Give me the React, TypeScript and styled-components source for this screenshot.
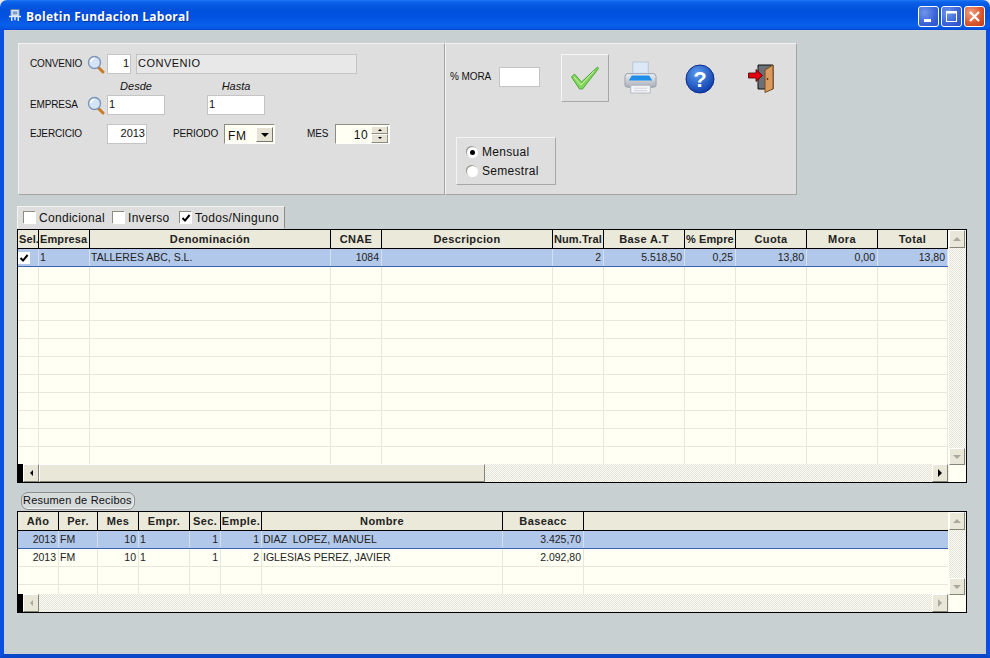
import React from 'react';
import styled, { createGlobalStyle } from 'styled-components';

const GlobalStyle = createGlobalStyle`
  html, body {
    margin: 0;
    padding: 0;
    background: #e8e8e8;
  }
  * {
    box-sizing: border-box;
  }
`;

const UI_FONT = `"Liberation Sans", Arial, sans-serif`;

const Window = styled.div`
  width: 990px;
  height: 658px;
  display: flex;
  flex-direction: column;
  border-radius: 7px 7px 0 0;
  overflow: hidden;
  font-family: ${UI_FONT};
  font-size: 11px;
  color: #111;
`;

const TitleBar = styled.div`
  height: 30px;
  flex: none;
  display: flex;
  align-items: center;
  padding: 0 5px 0 8px;
  background: linear-gradient(
    180deg,
    #2a7cf0 0,
    #0f6af0 1px,
    #0a5fe6 3px,
    #0050dc 10px,
    #0052e0 17px,
    #0860ea 25px,
    #0658e4 28px,
    #0048d4 30px
  );
`;

const TitleIcon = styled.svg`
  width: 14px;
  height: 14px;
  margin-right: 4px;
`;

const TitleText = styled.div`
  flex: 1;
  margin-top: 3px;
  color: #fff;
  font-family: "Open Sans", sans-serif;
  font-weight: 700;
  font-size: 12px;
  letter-spacing: 0.26px;
  text-shadow: 1px 1px 0 #0a2f9c;
`;

const CaptionButton = styled.div<{ $close?: boolean }>`
  width: 21px;
  height: 21px;
  margin-left: 2px;
  margin-top: 2px;
  border: 1px solid #fff;
  border-radius: 3px;
  display: flex;
  align-items: center;
  justify-content: center;
  background: ${(p) =>
    p.$close
      ? 'radial-gradient(circle at 30% 30%, #f0a080, #d8542c 60%, #c03c18)'
      : 'radial-gradient(circle at 30% 30%, #6f95ea, #3a62d8 60%, #2a4cc4)'};
  & > svg {
    width: 15px;
    height: 15px;
  }
`;

const Body = styled.div`
  flex: 1;
  display: flex;
  flex-direction: column;
  padding: 13px 19px 0 13px;
  background: #c9d0d2;
  border-left: 4px solid #0a50e0;
  border-right: 4px solid #0a50e0;
  border-bottom: 4px solid #0a47c8;
`;

const TopRow = styled.div`
  display: flex;
  height: 152px;
  margin-left: 1px;
`;

const Panel = styled.div<{ $w: number }>`
  width: ${(p) => p.$w}px;
  display: flex;
  flex-direction: column;
  background: #dedede;
  border: 1px solid;
  border-color: #f2f2f2 #a4a4a4 #a4a4a4 #f2f2f2;
`;

const FormArea = styled.div`
  padding: 10px 0 0 11px;
  display: flex;
  flex-direction: column;
`;

const FormRow = styled.div<{ $top?: number }>`
  display: flex;
  align-items: center;
  height: 20px;
  margin-top: ${(p) => p.$top ?? 0}px;
`;

const Label = styled.span<{ $w: number; $ml?: number }>`
  width: ${(p) => p.$w}px;
  margin-left: ${(p) => p.$ml ?? 0}px;
  padding-bottom: 2px;
  flex: none;
  font-size: 10px;
  letter-spacing: -0.15px;
  white-space: nowrap;
`;

const Caption = styled.span<{ $w: number; $ml?: number }>`
  width: ${(p) => p.$w}px;
  margin-left: ${(p) => p.$ml ?? 0}px;
  padding-top: 2px;
  text-align: center;
  font-style: italic;
  font-size: 11px;
`;

const Lens = styled.svg`
  width: 18px;
  height: 19px;
  flex: none;
  margin-right: 2px;
`;

const TextField = styled.div<{ $w: number; $align?: string; $ml?: number; $read?: boolean }>`
  width: ${(p) => p.$w}px;
  height: 20px;
  flex: none;
  margin-left: ${(p) => p.$ml ?? 0}px;
  padding: 0 1px;
  line-height: 16px;
  font-size: 11px;
  letter-spacing: ${(p) => (p.$read ? 0.5 : 0)}px;
  text-align: ${(p) => p.$align ?? 'left'};
  background: ${(p) => (p.$read ? '#e8e8e8' : '#fff')};
  border: 1px solid #c4c4c4;
  white-space: nowrap;
`;

const SelectBox = styled.div`
  width: 51px;
  height: 20px;
  flex: none;
  margin-right: 32px;
  display: flex;
  align-items: center;
  justify-content: space-between;
  padding: 1px 1px 0 3px;
  background: #fffff4;
  border: 1px solid #8d8d82;
  border-right-color: #fff;
  border-bottom-color: #fff;
  font-size: 12px;
`;

const SelectText = styled.span`
  padding-top: 2px;
  letter-spacing: 0.6px;
`;

const SelectButton = styled.div`
  width: 17px;
  height: 15px;
  display: flex;
  align-items: center;
  justify-content: center;
  background: #e6e3d4;
  border: 1px solid;
  border-color: #fff #77776c #77776c #fff;
`;

const Arrow = styled.i<{ $dir: 'up' | 'down' | 'left' | 'right'; $off?: boolean; $s?: number }>`
  display: block;
  width: 0;
  height: 0;
  ${(p) => {
    const s = p.$s ?? 4;
    const c = p.$off ? '#aaa99c' : '#000';
    const t = 'transparent';
    if (p.$dir === 'up') return `border-left: ${s}px solid ${t}; border-right: ${s}px solid ${t}; border-bottom: ${s}px solid ${c};`;
    if (p.$dir === 'down') return `border-left: ${s}px solid ${t}; border-right: ${s}px solid ${t}; border-top: ${s}px solid ${c};`;
    if (p.$dir === 'left') return `border-top: ${s}px solid ${t}; border-bottom: ${s}px solid ${t}; border-right: ${s}px solid ${c};`;
    return `border-top: ${s}px solid ${t}; border-bottom: ${s}px solid ${t}; border-left: ${s}px solid ${c};`;
  }}
`;

const SpinBox = styled.div`
  width: 55px;
  height: 20px;
  flex: none;
  display: flex;
  align-items: center;
  justify-content: flex-end;
  background: #fffff4;
  border: 1px solid #8d8d82;
  border-right-color: #fff;
  border-bottom-color: #fff;
  font-size: 12px;
`;

const SpinValue = styled.span`
  margin-right: 3px;
  letter-spacing: 0.4px;
  padding-top: 1px;
`;

const SpinButtons = styled.div`
  width: 17px;
  height: 17px;
  margin-right: 1px;
  display: flex;
  flex-direction: column;
`;

const SpinButton = styled.div`
  flex: 1;
  display: flex;
  align-items: center;
  justify-content: center;
  background: #e6e3d4;
  border: 1px solid;
  border-color: #fff #8d8d82 #8d8d82 #fff;
`;

const ActionRow = styled.div`
  display: flex;
  align-items: flex-start;
  height: 93px;
  padding: 10px 0 0 4px;
`;

const MoraBlock = styled.div`
  display: flex;
  align-items: center;
  width: 110px;
  margin-top: 13px;
`;

const MoraLabel = styled.span`
  width: 49px;
  font-size: 10px;
  letter-spacing: -0.1px;
  padding-bottom: 2px;
`;

const MoraInput = styled.div`
  width: 41px;
  height: 20px;
  background: #fff;
  border: 1px solid #c4c4c4;
`;

const OkButton = styled.div`
  width: 48px;
  height: 48px;
  margin-left: 1px;
  display: flex;
  align-items: center;
  justify-content: center;
  border: 1px solid;
  border-color: #f6f6f6 #a8a8a8 #a8a8a8 #f6f6f6;
`;

const ToolIcon = styled.svg<{ $w: number; $h: number; $ml: number; $top: number }>`
  width: ${(p) => p.$w}px;
  height: ${(p) => p.$h}px;
  margin-left: ${(p) => p.$ml}px;
  margin-top: ${(p) => p.$top}px;
  flex: none;
`;

const RadioGroup = styled.div`
  width: 100px;
  height: 48px;
  margin-left: 10px;
  padding: 5px 0 0 10px;
  display: flex;
  flex-direction: column;
  gap: 1px;
  border: 1px solid;
  border-color: #f4f4f4 #a8a8a8 #a8a8a8 #f4f4f4;
`;

const RadioRow = styled.div`
  display: flex;
  align-items: center;
  height: 18px;
  font-size: 12px;
  letter-spacing: 0.3px;
`;

const RadioMark = styled.span<{ $on?: boolean }>`
  width: 11px;
  height: 11px;
  margin-right: 4px;
  border-radius: 50%;
  background: #fff;
  box-shadow: -1px -1px 0 #9a9a90;
  display: flex;
  align-items: center;
  justify-content: center;
  &::after {
    content: '';
    width: 5px;
    height: 5px;
    border-radius: 50%;
    background: ${(p) => (p.$on ? '#000' : 'transparent')};
  }
`;

const TabStrip = styled.div`
  width: 268px;
  height: 23px;
  margin-top: 11px;
  padding-left: 6px;
  display: flex;
  align-items: center;
  background: #dedede;
  border: 1px solid;
  border-color: #f4f4f4 #8d8d82 transparent #f4f4f4;
  font-size: 12px;
  letter-spacing: 0.3px;
`;

const TabCheck = styled.label<{ $w: number }>`
  width: ${(p) => p.$w}px;
  display: flex;
  align-items: center;
  white-space: nowrap;
`;

const CheckMark = styled.span<{ $flat?: boolean }>`
  width: 12px;
  height: 12px;
  flex: none;
  margin-right: ${(p) => (p.$flat ? 0 : 3)}px;
  background: #fff;
  display: flex;
  align-items: center;
  justify-content: center;
  box-shadow: ${(p) => (p.$flat ? 'none' : '-1px -1px 0 #8d8d82')};
  & > svg {
    width: 10px;
    height: 10px;
  }
`;

const GridFrame = styled.div<{ $h: number }>`
  width: 950px;
  height: ${(p) => p.$h}px;
  flex: none;
  display: flex;
  border: 1px solid #000;
  background: #fffff4;
`;

const GridMain = styled.div`
  width: 931px;
  height: 100%;
  display: flex;
  flex-direction: column;
`;

const GridRows = styled.div`
  flex: 1;
  min-height: 0;
  overflow: hidden;
`;

const HeaderRow = styled.div<{ $cols: string }>`
  display: grid;
  grid-template-columns: ${(p) => p.$cols};
  height: 19px;
  border-bottom: 1px solid #000;
  background: #ebe9d9;
  margin-right: 1px;
`;

const HeaderCell = styled.div<{ $clip?: boolean; $open?: boolean }>`
  overflow: hidden;
  white-space: nowrap;
  text-align: ${(p) => (p.$clip ? 'left' : 'center')};
  padding-left: ${(p) => (p.$clip ? 1 : 0)}px;
  line-height: 18px;
  font-weight: 700;
  font-size: 11px;
  letter-spacing: ${(p) => (p.$clip ? 0.1 : 0.38)}px;
  color: #222;
  border-right: ${(p) => (p.$open ? 'none' : '1px solid #000')};
`;

const DataRow = styled.div<{ $cols: string; $sel?: boolean }>`
  display: grid;
  grid-template-columns: ${(p) => p.$cols};
  height: 18px;
  margin-right: 1px;
  background: ${(p) => (p.$sel ? '#b2c8ea' : '#fffff4')};
  border-bottom: 1px solid ${(p) => (p.$sel ? '#3c62b4' : '#e8e8da')};
`;

const DataCell = styled.div<{ $right?: boolean; $sel?: boolean; $open?: boolean; $tight?: boolean }>`
  overflow: hidden;
  white-space: pre;
  line-height: 17px;
  font-size: 10.5px;
  padding: ${(p) => (p.$right ? '0 2px 0 0' : p.$tight ? '0' : '0 0 0 1px')};
  text-align: ${(p) => (p.$right ? 'right' : 'left')};
  color: #222;
  display: flex;
  align-items: center;
  justify-content: ${(p) => (p.$right ? 'flex-end' : 'flex-start')};
  border-right: ${(p) => (p.$open ? 'none' : `1px solid ${p.$sel ? '#d4e0f2' : '#e8e8da'}`)};
`;

const dither = `repeating-conic-gradient(#e2e2d8 0 25%, #fdfdf6 0 50%) 0 0 / 2px 2px`;

const HScroll = styled.div`
  height: 18px;
  flex: none;
  display: flex;
  align-items: stretch;
  padding-right: 1px;
  background: ${dither};
`;

const BlackTab = styled.div`
  width: 5px;
  background: #000;
  flex: none;
`;

const ScrollButton = styled.div<{ $h?: number }>`
  width: 16px;
  height: ${(p) => (p.$h ? `${p.$h}px` : 'auto')};
  flex: none;
  display: flex;
  align-items: center;
  justify-content: center;
  background: #e9e7d8;
  border: 1px solid;
  border-color: #fff #85857a #85857a #fff;
`;

const Thumb = styled.div<{ $w: number }>`
  width: ${(p) => p.$w}px;
  flex: none;
  background: #e9e7d8;
  border: 1px solid;
  border-color: #fff #85857a #85857a #fff;
`;

const TrackFill = styled.div`
  flex: 1;
`;

const VScroll = styled.div`
  width: 17px;
  flex: none;
  height: 100%;
  display: flex;
  flex-direction: column;
`;

const VTrack = styled.div`
  flex: 1;
  display: flex;
  flex-direction: column;
  justify-content: space-between;
  background: ${dither};
`;

const Corner = styled.div`
  height: 17px;
  flex: none;
  background: #fffff4;
`;

const Pill = styled.div`
  width: 114px;
  height: 18px;
  margin: 9px 0 1px 4px;
  flex: none;
  padding-left: 1px;
  line-height: 15px;
  font-size: 11px;
  letter-spacing: 0.2px;
  border: 1px solid #8d8d8d;
  border-radius: 7px;
  background: #d5dadb;
  box-shadow: inset -1px -1px 0 #f0f0f0;
`;

const Tick = () => (
  <svg viewBox="0 0 10 10">
    <path d="M1.5 5 L4 7.6 L8.6 2" fill="none" stroke="#000" strokeWidth="2" />
  </svg>
);

const LensIcon = () => (
  <Lens viewBox="0 0 18 19">
    <path d="M11 12 L16 17" stroke="#c87a24" strokeWidth="3" strokeLinecap="round" />
    <circle cx="7.5" cy="7.5" r="6" fill="#d4e4f6" stroke="#7c96b8" strokeWidth="1.4" />
    <path d="M3.8 7 A4 4 0 0 1 7.5 3.4" fill="none" stroke="#fff" strokeWidth="1.6" />
  </Lens>
);

const firstCols = '21px 51px 241px 51px 171px 51px 81px 51px 71px 71px 70px';
const secondCols = '41px 39px 41px 51px 31px 41px 241px 81px 364px';

const firstHeaders: [string, boolean?][] = [
  ['Sel.', true],
  ['Empresa', true],
  ['Denominación'],
  ['CNAE'],
  ['Descripcion'],
  ['Num.Tral', true],
  ['Base A.T'],
  ['% Empre', true],
  ['Cuota'],
  ['Mora'],
  ['Total'],
];

const firstAlign = [false, false, false, true, false, true, true, true, true, true, true];
const firstRow = ['', '1', 'TALLERES ABC, S.L.', '1084', '', '2', '5.518,50', '0,25', '13,80', '0,00', '13,80'];

const secondHeaders = ['Año', 'Per.', 'Mes', 'Empr.', 'Sec.', 'Emple.', 'Nombre', 'Baseacc', ''];
const secondAlign = [true, false, true, false, true, true, false, true, false];
const secondRows = [
  ['2013', 'FM', '10', '1', '1', '1', 'DIAZ  LOPEZ, MANUEL', '3.425,70', ''],
  ['2013', 'FM', '10', '1', '1', '2', 'IGLESIAS PEREZ, JAVIER', '2.092,80', ''],
  ['', '', '', '', '', '', '', '', ''],
  ['', '', '', '', '', '', '', '', ''],
];

const App = () => (
  <Window>
    <GlobalStyle />
    <TitleBar>
      <TitleIcon viewBox="0 0 15 15">
        <path d="M3 1.5 H12 V9 H3 Z" fill="#dfe8f4" stroke="#5d7fa8" />
        <path d="M5 3.5 H10 V7 H5 Z" fill="#7ba0cc" />
        <path d="M1 9 H14 M4 9 V14 M11 9 V14 M7.5 9 V13" stroke="#dfe8f4" strokeWidth="1.6" />
      </TitleIcon>
      <TitleText>Boletin Fundacion Laboral</TitleText>
      <CaptionButton>
        <svg viewBox="0 0 15 15">
          <rect x="3" y="10" width="7" height="3" fill="#fff" />
        </svg>
      </CaptionButton>
      <CaptionButton>
        <svg viewBox="0 0 15 15">
          <rect x="2.5" y="2.5" width="10" height="10" fill="none" stroke="#fff" />
          <rect x="2" y="2" width="11" height="2.5" fill="#fff" />
        </svg>
      </CaptionButton>
      <CaptionButton $close>
        <svg viewBox="0 0 15 15">
          <path d="M3 3 L12 12 M12 3 L3 12" stroke="#fff" strokeWidth="2.2" />
        </svg>
      </CaptionButton>
    </TitleBar>
    <Body>
      <TopRow>
        <Panel $w={427}>
          <FormArea>
            <FormRow>
              <Label $w={57}>CONVENIO</Label>
              <LensIcon />
              <TextField $w={24} $align="right">1</TextField>
              <TextField $w={221} $ml={5} $read>CONVENIO</TextField>
            </FormRow>
            <FormRow $top={1}>
              <Caption $w={58} $ml={77}>Desde</Caption>
              <Caption $w={58} $ml={42}>Hasta</Caption>
            </FormRow>
            <FormRow>
              <Label $w={57}>EMPRESA</Label>
              <LensIcon />
              <TextField $w={58}>1</TextField>
              <TextField $w={58} $ml={42}>1</TextField>
            </FormRow>
            <FormRow $top={9}>
              <Label $w={77}>EJERCICIO</Label>
              <TextField $w={40} $align="right">2013</TextField>
              <Label $w={51} $ml={26}>PERIODO</Label>
              <SelectBox>
                <SelectText>FM</SelectText>
                <SelectButton>
                  <Arrow $dir="down" />
                </SelectButton>
              </SelectBox>
              <Label $w={28}>MES</Label>
              <SpinBox>
                <SpinValue>10</SpinValue>
                <SpinButtons>
                  <SpinButton>
                    <Arrow $dir="up" $s={2} />
                  </SpinButton>
                  <SpinButton>
                    <Arrow $dir="down" $s={2} />
                  </SpinButton>
                </SpinButtons>
              </SpinBox>
            </FormRow>
          </FormArea>
        </Panel>
        <Panel $w={352}>
          <ActionRow>
            <MoraBlock>
              <MoraLabel>% MORA</MoraLabel>
              <MoraInput />
            </MoraBlock>
            <OkButton>
              <svg width="30" height="26" viewBox="0 0 30 26">
                <path
                  d="M1.5 12 L4.5 9 L11.5 17 L27.5 2 L28.5 3.5 L12.5 24 L9.5 24 Z"
                  fill="#84d65c"
                  stroke="#4aa838"
                  strokeWidth="1"
                  strokeLinejoin="round"
                />
                <path d="M4 12 L11 20 L24 6" fill="none" stroke="#c8f0a8" strokeWidth="1" />
              </svg>
            </OkButton>
            <ToolIcon $w={33} $h={33} $ml={15} $top={7} viewBox="0 0 34 34">
              <defs>
                <linearGradient id="printBody" x1="0" y1="0" x2="0" y2="1">
                  <stop offset="0" stopColor="#eceef2" />
                  <stop offset="1" stopColor="#aab0ba" />
                </linearGradient>
              </defs>
              <path d="M9 1 H25 V15 H9 Z" fill="#dce8f6" stroke="#b8c6d8" />
              <path d="M4 13 H30 Q33 13 33 16 V25 Q33 27 30 27 H4 Q1 27 1 25 V16 Q1 13 4 13 Z" fill="url(#printBody)" stroke="#98a0ac" />
              <path d="M8 15 H26 L29 20 H5 Z" fill="#1e8ee8" />
              <path d="M7 25 H27 V33 H7 Z" fill="#f6f6f8" stroke="#b0b6c0" />
              <path d="M10 28 H24 M10 30.5 H24" stroke="#ccd0d8" />
            </ToolIcon>
            <ToolIcon $w={30} $h={30} $ml={28} $top={10} viewBox="0 0 30 30">
              <defs>
                <radialGradient id="helpBlue" cx="40%" cy="30%" r="75%">
                  <stop offset="0" stopColor="#5b9cf0" />
                  <stop offset="1" stopColor="#0a38a8" />
                </radialGradient>
              </defs>
              <circle cx="15" cy="15" r="14" fill="url(#helpBlue)" stroke="#0a2c8c" />
              <text
                x="15"
                y="22.5"
                textAnchor="middle"
                fontFamily="Liberation Sans, sans-serif"
                fontWeight="700"
                fontSize="22"
                fill="#fff"
              >
                ?
              </text>
            </ToolIcon>
            <ToolIcon $w={26} $h={29} $ml={33} $top={10} viewBox="0 0 26 29">
              <path d="M10 1 H25 V25 H10 Z" fill="#6c7078" stroke="#111" />
              <path d="M17 6 L25 1 V25 L17 28.5 Z" fill="#d99a5c" stroke="#7a4a20" />
              <circle cx="19.5" cy="15" r="0.9" fill="#5a3410" />
              <path d="M0.5 9 H8 V5.5 L14.5 11.5 L8 17.5 V14 H0.5 Z" fill="#e4000c" stroke="#400" strokeWidth="0.8" />
            </ToolIcon>
          </ActionRow>
          <RadioGroup>
            <RadioRow>
              <RadioMark $on />
              Mensual
            </RadioRow>
            <RadioRow>
              <RadioMark />
              Semestral
            </RadioRow>
          </RadioGroup>
        </Panel>
      </TopRow>

      <TabStrip>
        <TabCheck $w={89}>
          <CheckMark />
          Condicional
        </TabCheck>
        <TabCheck $w={67}>
          <CheckMark />
          Inverso
        </TabCheck>
        <TabCheck $w={104}>
          <CheckMark>
            <Tick />
          </CheckMark>
          Todos/Ninguno
        </TabCheck>
      </TabStrip>

      <GridFrame $h={254}>
        <GridMain>
          <HeaderRow $cols={firstCols}>
            {firstHeaders.map(([text, clip]) => (
              <HeaderCell key={text} $clip={clip}>
                {text}
              </HeaderCell>
            ))}
          </HeaderRow>
          <GridRows>
            <DataRow $cols={firstCols} $sel>
              {firstRow.map((text, i) => (
                <DataCell key={i} $right={firstAlign[i]} $sel $tight={i === 0}>
                  {i === 0 ? (
                    <CheckMark $flat>
                      <Tick />
                    </CheckMark>
                  ) : (
                    text
                  )}
                </DataCell>
              ))}
            </DataRow>
            {Array.from({ length: 11 }, (_, r) => (
              <DataRow $cols={firstCols} key={r}>
                {firstRow.map((_, i) => (
                  <DataCell key={i} />
                ))}
              </DataRow>
            ))}
          </GridRows>
          <HScroll>
            <BlackTab />
            <ScrollButton>
              <Arrow $dir="left" $s={3} />
            </ScrollButton>
            <Thumb $w={446} />
            <TrackFill />
            <ScrollButton>
              <Arrow $dir="right" $s={4} />
            </ScrollButton>
          </HScroll>
        </GridMain>
        <VScroll>
          <VTrack>
            <ScrollButton $h={18}>
              <Arrow $dir="up" $off />
            </ScrollButton>
            <ScrollButton $h={17}>
              <Arrow $dir="down" $off />
            </ScrollButton>
          </VTrack>
          <Corner />
        </VScroll>
      </GridFrame>

      <Pill>Resumen de Recibos</Pill>

      <GridFrame $h={102}>
        <GridMain>
          <HeaderRow $cols={secondCols}>
            {secondHeaders.map((text, i) => (
              <HeaderCell key={i} $open={i === 8}>
                {text}
              </HeaderCell>
            ))}
          </HeaderRow>
          <GridRows>
            {secondRows.map((row, r) => (
              <DataRow $cols={secondCols} key={r} $sel={r === 0}>
                {row.map((text, i) => (
                  <DataCell key={i} $right={secondAlign[i]} $sel={r === 0} $open={i === 8}>
                    {text}
                  </DataCell>
                ))}
              </DataRow>
            ))}
          </GridRows>
          <HScroll>
            <BlackTab />
            <ScrollButton>
              <Arrow $dir="left" $s={3} $off />
            </ScrollButton>
            <TrackFill />
            <ScrollButton>
              <Arrow $dir="right" $s={4} $off />
            </ScrollButton>
          </HScroll>
        </GridMain>
        <VScroll>
          <VTrack>
            <ScrollButton $h={18}>
              <Arrow $dir="up" $off />
            </ScrollButton>
            <ScrollButton $h={17}>
              <Arrow $dir="down" $off />
            </ScrollButton>
          </VTrack>
          <Corner />
        </VScroll>
      </GridFrame>
    </Body>
  </Window>
);

export default App;
